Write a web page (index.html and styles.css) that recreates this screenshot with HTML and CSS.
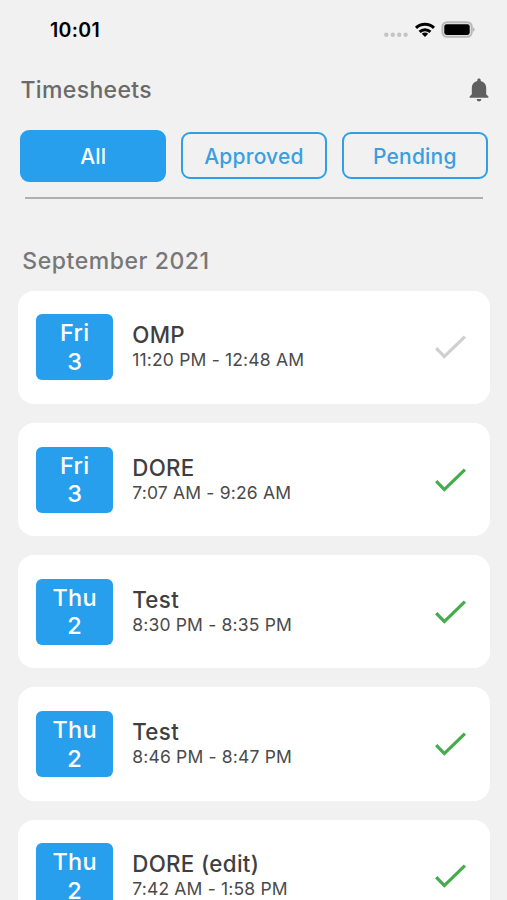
FILE: index.html
```
<!DOCTYPE html>
<html lang="en">
<head>
<meta charset="utf-8">
<title>Timesheets</title>
<link rel="stylesheet" href="styles.css">
</head>
<body>
<div class="status">
  <span class="clock">10:01</span>
  <svg class="status-icons" width="92" height="20" viewBox="0 0 92 20">
    <g fill="#c4c4c4"><circle cx="3.3" cy="14.8" r="2.2"/><circle cx="9.8" cy="14.8" r="2.2"/><circle cx="16.2" cy="14.8" r="2.2"/><circle cx="22.6" cy="14.8" r="2.2"/></g>
    <g fill="none" stroke="#000" stroke-width="3"><path d="M33 7.9a13 13 0 0 1 18 0"/><path d="M36.6 11.9a7.8 7.8 0 0 1 10.8 0"/></g>
    <path d="M42 17l-3.2-3.2a4.5 4.5 0 0 1 6.4 0z"/>
    <rect x="59.3" y="2.1" width="29.6" height="14.8" rx="4.8" fill="#ddd" stroke="#b8b8b8" stroke-width="1.8"/>
    <rect x="61.3" y="4.2" width="25.4" height="10.8" rx="2.4"/>
    <path d="M90.2 7.2q2.8 2.3 0 4.6z" fill="#aaa"/>
  </svg>
</div>
<header class="header">
  <h1>Timesheets</h1>
  <svg class="bell" width="20" height="24" viewBox="0 0 20 24" fill="#5f5f5f"><path d="M10 .5c-1 0-1.7.7-1.7 1.6v.8C4.6 3.7 2.8 6.4 2.8 9.8v6.5L.6 18.6v1.2h18.8v-1.2l-2.2-2.3V9.8c0-3.4-1.8-6.1-5.5-6.9v-.8C11.7 1.2 11 .5 10 .5z"/><path d="M7.6 21h4.8a2.4 2.4 0 0 1-4.8 0z"/></svg>
</header>
<nav class="tabs">
  <button class="tab active">All</button>
  <button class="tab">Approved</button>
  <button class="tab">Pending</button>
</nav>
<hr class="divider">
<h2>September 2021</h2>
<main class="list">
  <article class="card">
    <div class="date"><span>Fri</span><span>3</span></div>
    <div class="info"><div class="name">OMP</div><div class="time">11:20 PM - 12:48 AM</div></div>
    <svg class="check pending" viewBox="0 0 32 24"><path d="M1.2 13.2l8.1 8.4L29.9 1.6"/></svg>
  </article>
  <article class="card">
    <div class="date"><span>Fri</span><span>3</span></div>
    <div class="info"><div class="name">DORE</div><div class="time">7:07 AM - 9:26 AM</div></div>
    <svg class="check" viewBox="0 0 32 24"><path d="M1.2 13.2l8.1 8.4L29.9 1.6"/></svg>
  </article>
  <article class="card">
    <div class="date"><span>Thu</span><span>2</span></div>
    <div class="info"><div class="name">Test</div><div class="time">8:30 PM - 8:35 PM</div></div>
    <svg class="check" viewBox="0 0 32 24"><path d="M1.2 13.2l8.1 8.4L29.9 1.6"/></svg>
  </article>
  <article class="card">
    <div class="date"><span>Thu</span><span>2</span></div>
    <div class="info"><div class="name">Test</div><div class="time">8:46 PM - 8:47 PM</div></div>
    <svg class="check" viewBox="0 0 32 24"><path d="M1.2 13.2l8.1 8.4L29.9 1.6"/></svg>
  </article>
  <article class="card">
    <div class="date"><span>Thu</span><span>2</span></div>
    <div class="info"><div class="name">DORE (edit)</div><div class="time">7:42 AM - 1:58 PM</div></div>
    <svg class="check" viewBox="0 0 32 24"><path d="M1.2 13.2l8.1 8.4L29.9 1.6"/></svg>
  </article>
</main>
</body>
</html>
```

FILE: styles.css
```
* { box-sizing: border-box; }
body {
  margin: 0;
  height: 900px;
  overflow: hidden;
  background: #f1f1f1;
  font-family: Inter, "Liberation Sans", sans-serif;
}
.status {
  display: flex;
  justify-content: space-between;
  align-items: center;
  height: 60px;
  padding: 0 32px 0 50px;
}
.clock { font-size: 19.5px; font-weight: 600; letter-spacing: 0.3px; }
.header {
  display: flex;
  justify-content: space-between;
  align-items: center;
  height: 60px;
  padding: 0 18.5px 0 20.5px;
}
h1, h2 { margin: 0; font-weight: 500; font-size: 23px; }
h1 { color: #6a6a6a; letter-spacing: 0.35px; }
.tabs {
  display: flex;
  align-items: center;
  gap: 14.5px;
  height: 52px;
  margin: 9.7px 19px 0 20px;
}
.tab {
  flex: 1 1 0;
  height: 47px;
  padding: 1.5px 0 0;
  border: 2px solid #2f9fe6;
  border-radius: 9px;
  background: transparent;
  color: #3a9fe0;
  font: 500 21px Inter, "Liberation Sans", sans-serif;
  letter-spacing: 0.2px;
}
.tab.active { height: 52px; border-color: #289fec; background: #289fec; color: #fff; }
.divider { height: 2px; margin: 15.3px 24px 0 24.5px; border: 0; background: #afafaf; }
h2 {
  height: 91.6px;
  padding: 47px 0 0 22.3px;
  line-height: 31px;
  color: #777;
  letter-spacing: 0.55px;
}
.list { display: grid; gap: 19px; padding: 0 17px 0 17.5px; }
.card {
  display: flex;
  align-items: center;
  height: 113.3px;
  padding: 0 23.5px 0 18.7px;
  border-radius: 16px;
  background: #fff;
}
.date {
  display: flex;
  flex-direction: column;
  align-items: center;
  width: 77px;
  height: 66px;
  padding-top: 5px;
  border-radius: 6px;
  background: #289fec;
  color: #fff;
  font-size: 23.5px;
  font-weight: 500;
  line-height: 28.4px;
  letter-spacing: 0.2px;
}
.info { flex: 1; padding-left: 19px; color: #3f3f3f; }
.name { font-size: 22.3px; font-weight: 450; line-height: 25px; letter-spacing: 0.35px; }
.time { font-size: 17.5px; line-height: 25px; color: #4a4a4a; letter-spacing: 0.18px; }
.check { width: 32px; height: 24px; overflow: visible; fill: none; stroke: #43ac4b; stroke-width: 3.2; }
.check.pending { stroke: #cfcfcf; }
```
